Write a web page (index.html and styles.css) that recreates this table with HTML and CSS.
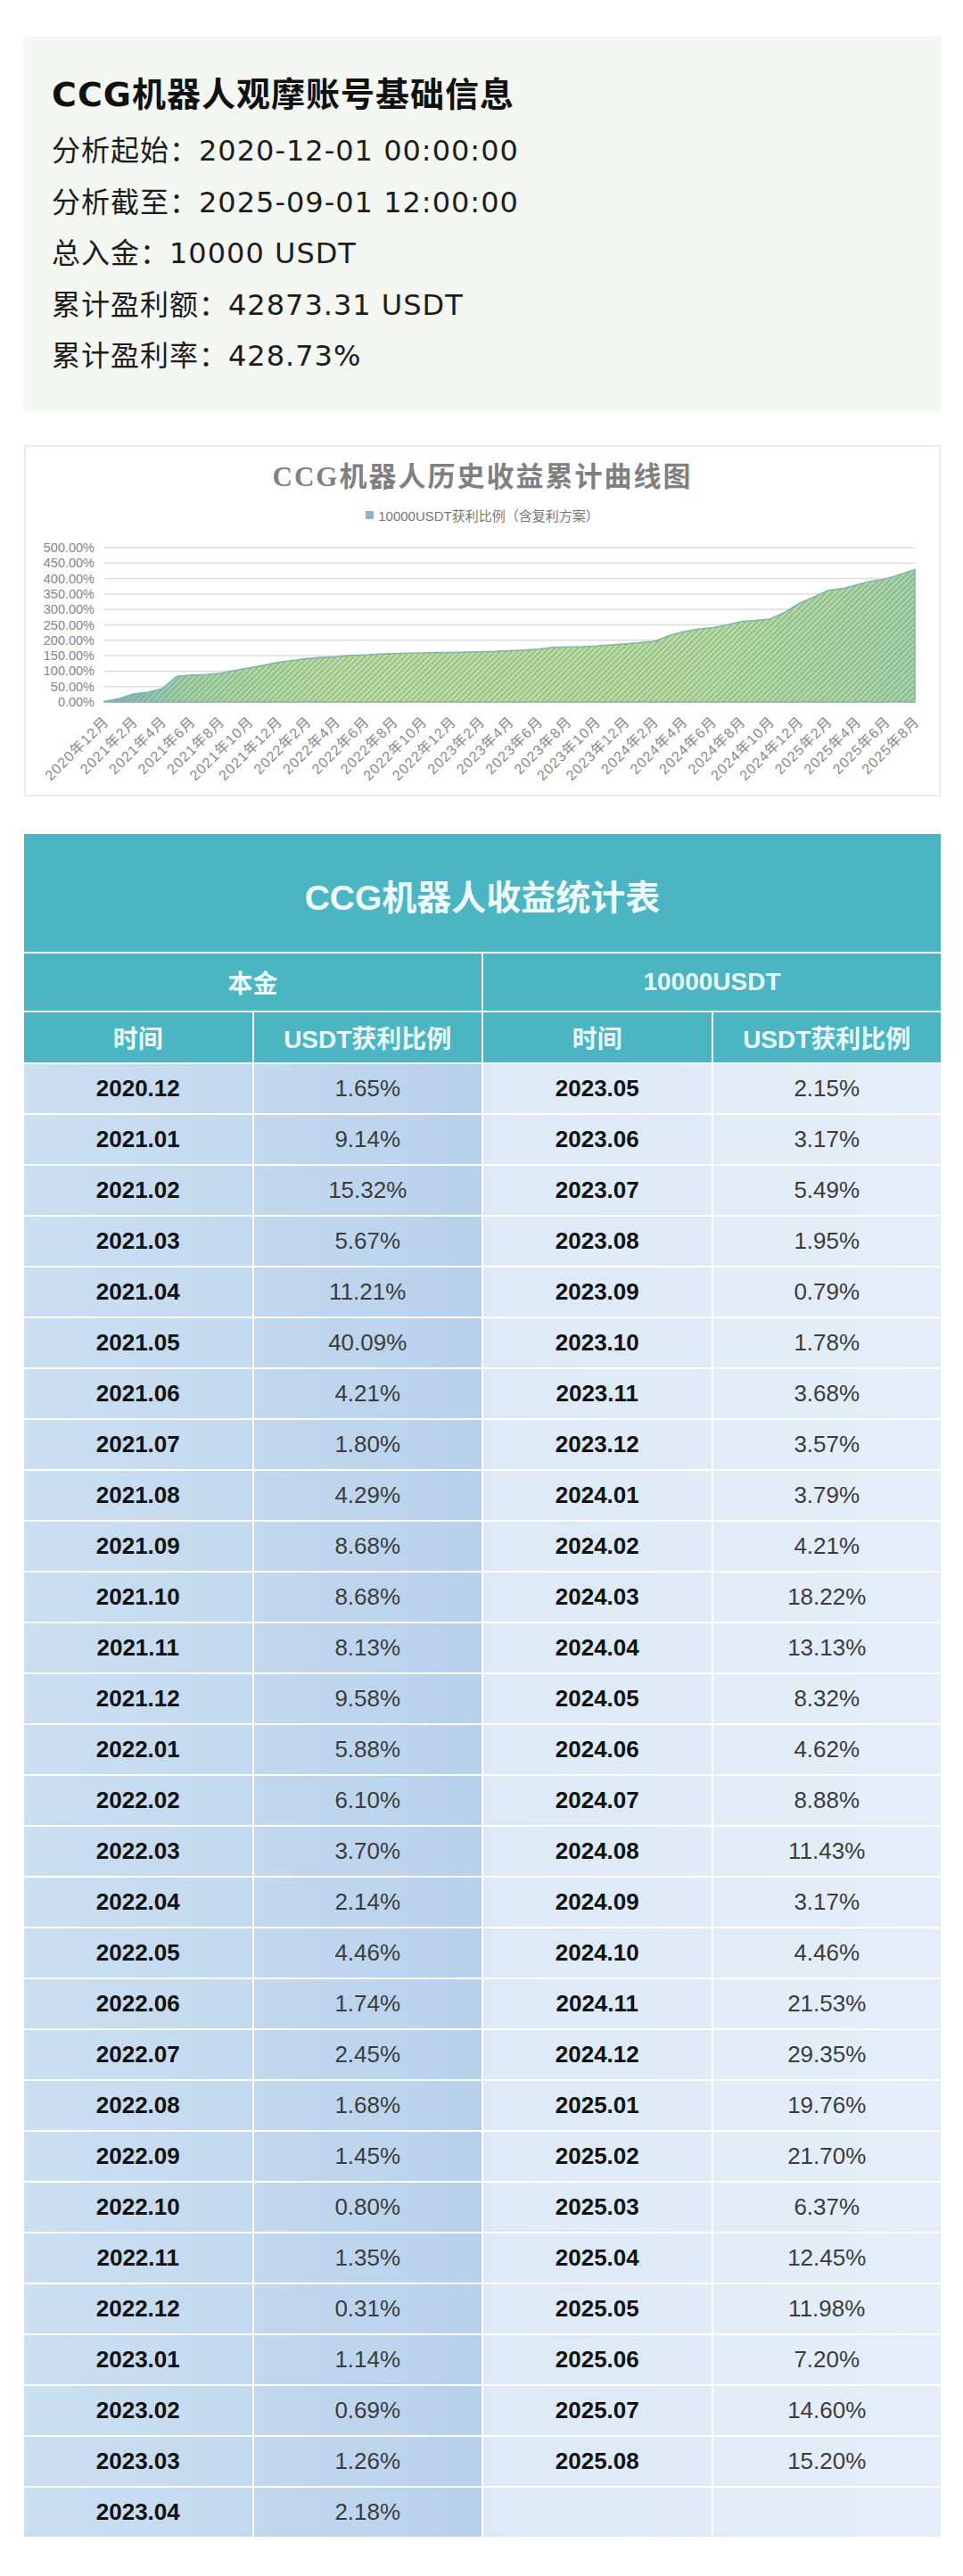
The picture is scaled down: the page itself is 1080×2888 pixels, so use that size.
FILE: index.html
```html
<!DOCTYPE html>
<html lang="zh-CN">
<head>
<meta charset="utf-8">
<title>CCG机器人观摩账号</title>
<link rel="stylesheet" href="styles.css">
</head>
<body>
<main class="page">
  <section class="info">
    <h1 class="info-title">CCG机器人观摩账号基础信息</h1>
    <p class="info-line">分析起始：2020-12-01 00:00:00</p>
    <p class="info-line">分析截至：2025-09-01 12:00:00</p>
    <p class="info-line">总入金：10000 USDT</p>
    <p class="info-line">累计盈利额：42873.31 USDT</p>
    <p class="info-line">累计盈利率：428.73%</p>
  </section>

  <section class="chart">
    <h2 class="chart-title">CCG机器人历史收益累计曲线图</h2>
    <div class="legend"><span class="legend-swatch"></span><span>10000USDT获利比例（含复利方案）</span></div>
    <svg class="plot" width="1024" height="303" viewBox="0 0 1024 303" xmlns="http://www.w3.org/2000/svg">
      <defs>
        <linearGradient id="areaFill" x1="0" y1="0" x2="1" y2="0">
          <stop offset="0" stop-color="#7db4c6"/>
          <stop offset="0.1" stop-color="#a6d3a2"/>
          <stop offset="0.3" stop-color="#bfe09a"/>
          <stop offset="0.75" stop-color="#b9dd9c"/>
          <stop offset="1" stop-color="#a9d4a4"/>
        </linearGradient>
        <pattern id="hatch" width="4.5" height="4.5" patternUnits="userSpaceOnUse" patternTransform="rotate(45)">
          <rect x="0" y="0" width="1.7" height="4.5" fill="#5f9187" fill-opacity="0.45"/>
        </pattern>
      </defs>
      <g transform="translate(-1 0)">
        <g class="grid-lines" stroke="#dcdcdc" stroke-width="1.5">
          <line x1="89" y1="26" x2="998" y2="26"/>
          <line x1="89" y1="43.3" x2="998" y2="43.3"/>
          <line x1="89" y1="60.6" x2="998" y2="60.6"/>
          <line x1="89" y1="77.9" x2="998" y2="77.9"/>
          <line x1="89" y1="95.2" x2="998" y2="95.2"/>
          <line x1="89" y1="112.5" x2="998" y2="112.5"/>
          <line x1="89" y1="129.8" x2="998" y2="129.8"/>
          <line x1="89" y1="147.1" x2="998" y2="147.1"/>
          <line x1="89" y1="164.4" x2="998" y2="164.4"/>
          <line x1="89" y1="181.7" x2="998" y2="181.7"/>
          <line x1="89" y1="199" x2="998" y2="199"/>
        </g>
        <g class="y-labels" text-anchor="end">
          <text x="78" y="31">500.00%</text>
          <text x="78" y="48.3">450.00%</text>
          <text x="78" y="65.6">400.00%</text>
          <text x="78" y="82.9">350.00%</text>
          <text x="78" y="100.2">300.00%</text>
          <text x="78" y="117.5">250.00%</text>
          <text x="78" y="134.8">200.00%</text>
          <text x="78" y="152.1">150.00%</text>
          <text x="78" y="169.4">100.00%</text>
          <text x="78" y="186.7">50.00%</text>
          <text x="78" y="204">0.00%</text>
        </g>
        <path d="M89,199 L89,198.4 L105.2,195.3 L121.5,190 L137.7,188 L153.9,184.1 L170.2,170.3 L186.4,168.8 L202.6,168.2 L218.9,166.7 L235.1,163.7 L251.3,160.7 L267.6,157.9 L283.8,154.6 L300,152.5 L316.3,150.4 L332.5,149.1 L348.7,148.4 L365,146.9 L381.2,146.3 L397.4,145.4 L413.6,144.8 L429.9,144.3 L446.1,144 L462.3,143.6 L478.6,143.5 L494.8,143.1 L511,142.8 L527.3,142.4 L543.5,141.6 L559.7,140.9 L576,139.8 L592.2,137.9 L608.4,137.2 L624.7,137 L640.9,136.3 L657.1,135.1 L673.4,133.8 L689.6,132.5 L705.8,131.1 L722.1,124.8 L738.3,120.2 L754.5,117.3 L770.8,115.7 L787,112.7 L803.2,108.7 L819.4,107.6 L835.7,106.1 L851.9,98.6 L868.1,88.5 L884.4,81.6 L900.6,74.1 L916.8,71.9 L933.1,67.6 L949.3,63.5 L965.5,61 L981.8,55.9 L998,50.7 L998,199 Z" fill="url(#areaFill)"/>
        <path d="M89,199 L89,198.4 L105.2,195.3 L121.5,190 L137.7,188 L153.9,184.1 L170.2,170.3 L186.4,168.8 L202.6,168.2 L218.9,166.7 L235.1,163.7 L251.3,160.7 L267.6,157.9 L283.8,154.6 L300,152.5 L316.3,150.4 L332.5,149.1 L348.7,148.4 L365,146.9 L381.2,146.3 L397.4,145.4 L413.6,144.8 L429.9,144.3 L446.1,144 L462.3,143.6 L478.6,143.5 L494.8,143.1 L511,142.8 L527.3,142.4 L543.5,141.6 L559.7,140.9 L576,139.8 L592.2,137.9 L608.4,137.2 L624.7,137 L640.9,136.3 L657.1,135.1 L673.4,133.8 L689.6,132.5 L705.8,131.1 L722.1,124.8 L738.3,120.2 L754.5,117.3 L770.8,115.7 L787,112.7 L803.2,108.7 L819.4,107.6 L835.7,106.1 L851.9,98.6 L868.1,88.5 L884.4,81.6 L900.6,74.1 L916.8,71.9 L933.1,67.6 L949.3,63.5 L965.5,61 L981.8,55.9 L998,50.7 L998,199 Z" fill="url(#hatch)" stroke="#86b3ab" stroke-width="1.6"/>
        <g class="x-labels" text-anchor="end">
          <text transform="translate(95 222) rotate(-45)">2020年12月</text>
          <text transform="translate(127.5 222) rotate(-45)">2021年2月</text>
          <text transform="translate(159.9 222) rotate(-45)">2021年4月</text>
          <text transform="translate(192.4 222) rotate(-45)">2021年6月</text>
          <text transform="translate(224.9 222) rotate(-45)">2021年8月</text>
          <text transform="translate(257.3 222) rotate(-45)">2021年10月</text>
          <text transform="translate(289.8 222) rotate(-45)">2021年12月</text>
          <text transform="translate(322.3 222) rotate(-45)">2022年2月</text>
          <text transform="translate(354.7 222) rotate(-45)">2022年4月</text>
          <text transform="translate(387.2 222) rotate(-45)">2022年6月</text>
          <text transform="translate(419.6 222) rotate(-45)">2022年8月</text>
          <text transform="translate(452.1 222) rotate(-45)">2022年10月</text>
          <text transform="translate(484.6 222) rotate(-45)">2022年12月</text>
          <text transform="translate(517 222) rotate(-45)">2023年2月</text>
          <text transform="translate(549.5 222) rotate(-45)">2023年4月</text>
          <text transform="translate(582 222) rotate(-45)">2023年6月</text>
          <text transform="translate(614.4 222) rotate(-45)">2023年8月</text>
          <text transform="translate(646.9 222) rotate(-45)">2023年10月</text>
          <text transform="translate(679.4 222) rotate(-45)">2023年12月</text>
          <text transform="translate(711.8 222) rotate(-45)">2024年2月</text>
          <text transform="translate(744.3 222) rotate(-45)">2024年4月</text>
          <text transform="translate(776.7 222) rotate(-45)">2024年6月</text>
          <text transform="translate(809.2 222) rotate(-45)">2024年8月</text>
          <text transform="translate(841.7 222) rotate(-45)">2024年10月</text>
          <text transform="translate(874.1 222) rotate(-45)">2024年12月</text>
          <text transform="translate(906.6 222) rotate(-45)">2025年2月</text>
          <text transform="translate(939.1 222) rotate(-45)">2025年4月</text>
          <text transform="translate(971.5 222) rotate(-45)">2025年6月</text>
          <text transform="translate(1004 222) rotate(-45)">2025年8月</text>
        </g>
      </g>
    </svg>
  </section>

  <section class="stats">
    <div class="stats-title">CCG机器人收益统计表</div>
    <div class="stats-grid">
      <div class="head head-top">本金</div>
      <div class="head head-top">10000USDT</div>
      <div class="head head-sub">时间</div>
      <div class="head head-sub">USDT获利比例</div>
      <div class="head head-sub">时间</div>
      <div class="head head-sub">USDT获利比例</div>

      <div class="cell date c1">2020.12</div><div class="cell pct c2">1.65%</div><div class="cell date c3">2023.05</div><div class="cell pct c4">2.15%</div>
      <div class="cell date c1">2021.01</div><div class="cell pct c2">9.14%</div><div class="cell date c3">2023.06</div><div class="cell pct c4">3.17%</div>
      <div class="cell date c1">2021.02</div><div class="cell pct c2">15.32%</div><div class="cell date c3">2023.07</div><div class="cell pct c4">5.49%</div>
      <div class="cell date c1">2021.03</div><div class="cell pct c2">5.67%</div><div class="cell date c3">2023.08</div><div class="cell pct c4">1.95%</div>
      <div class="cell date c1">2021.04</div><div class="cell pct c2">11.21%</div><div class="cell date c3">2023.09</div><div class="cell pct c4">0.79%</div>
      <div class="cell date c1">2021.05</div><div class="cell pct c2">40.09%</div><div class="cell date c3">2023.10</div><div class="cell pct c4">1.78%</div>
      <div class="cell date c1">2021.06</div><div class="cell pct c2">4.21%</div><div class="cell date c3">2023.11</div><div class="cell pct c4">3.68%</div>
      <div class="cell date c1">2021.07</div><div class="cell pct c2">1.80%</div><div class="cell date c3">2023.12</div><div class="cell pct c4">3.57%</div>
      <div class="cell date c1">2021.08</div><div class="cell pct c2">4.29%</div><div class="cell date c3">2024.01</div><div class="cell pct c4">3.79%</div>
      <div class="cell date c1">2021.09</div><div class="cell pct c2">8.68%</div><div class="cell date c3">2024.02</div><div class="cell pct c4">4.21%</div>
      <div class="cell date c1">2021.10</div><div class="cell pct c2">8.68%</div><div class="cell date c3">2024.03</div><div class="cell pct c4">18.22%</div>
      <div class="cell date c1">2021.11</div><div class="cell pct c2">8.13%</div><div class="cell date c3">2024.04</div><div class="cell pct c4">13.13%</div>
      <div class="cell date c1">2021.12</div><div class="cell pct c2">9.58%</div><div class="cell date c3">2024.05</div><div class="cell pct c4">8.32%</div>
      <div class="cell date c1">2022.01</div><div class="cell pct c2">5.88%</div><div class="cell date c3">2024.06</div><div class="cell pct c4">4.62%</div>
      <div class="cell date c1">2022.02</div><div class="cell pct c2">6.10%</div><div class="cell date c3">2024.07</div><div class="cell pct c4">8.88%</div>
      <div class="cell date c1">2022.03</div><div class="cell pct c2">3.70%</div><div class="cell date c3">2024.08</div><div class="cell pct c4">11.43%</div>
      <div class="cell date c1">2022.04</div><div class="cell pct c2">2.14%</div><div class="cell date c3">2024.09</div><div class="cell pct c4">3.17%</div>
      <div class="cell date c1">2022.05</div><div class="cell pct c2">4.46%</div><div class="cell date c3">2024.10</div><div class="cell pct c4">4.46%</div>
      <div class="cell date c1">2022.06</div><div class="cell pct c2">1.74%</div><div class="cell date c3">2024.11</div><div class="cell pct c4">21.53%</div>
      <div class="cell date c1">2022.07</div><div class="cell pct c2">2.45%</div><div class="cell date c3">2024.12</div><div class="cell pct c4">29.35%</div>
      <div class="cell date c1">2022.08</div><div class="cell pct c2">1.68%</div><div class="cell date c3">2025.01</div><div class="cell pct c4">19.76%</div>
      <div class="cell date c1">2022.09</div><div class="cell pct c2">1.45%</div><div class="cell date c3">2025.02</div><div class="cell pct c4">21.70%</div>
      <div class="cell date c1">2022.10</div><div class="cell pct c2">0.80%</div><div class="cell date c3">2025.03</div><div class="cell pct c4">6.37%</div>
      <div class="cell date c1">2022.11</div><div class="cell pct c2">1.35%</div><div class="cell date c3">2025.04</div><div class="cell pct c4">12.45%</div>
      <div class="cell date c1">2022.12</div><div class="cell pct c2">0.31%</div><div class="cell date c3">2025.05</div><div class="cell pct c4">11.98%</div>
      <div class="cell date c1">2023.01</div><div class="cell pct c2">1.14%</div><div class="cell date c3">2025.06</div><div class="cell pct c4">7.20%</div>
      <div class="cell date c1">2023.02</div><div class="cell pct c2">0.69%</div><div class="cell date c3">2025.07</div><div class="cell pct c4">14.60%</div>
      <div class="cell date c1">2023.03</div><div class="cell pct c2">1.26%</div><div class="cell date c3">2025.08</div><div class="cell pct c4">15.20%</div>
      <div class="cell date c1">2023.04</div><div class="cell pct c2">2.18%</div><div class="cell date c3"></div><div class="cell pct c4"></div>
    </div>
  </section>
</main>
</body>
</html>
```

FILE: styles.css
```css
* { box-sizing: border-box; }

html, body {
  margin: 0;
  padding: 0;
  background: #ffffff;
}

body {
  font-family: "DejaVu Sans", "Noto Sans CJK SC", sans-serif;
  color: #161616;
}

.page {
  width: 1080px;
  padding: 41px 25px 0 27px;
}

/* ---------- info box ---------- */
.info {
  background: #f4f6f1;
  padding: 40px 32px 32px 31px;
}

.info-title {
  margin: 0 0 10px 0;
  font-size: 38px;
  line-height: 50px;
  letter-spacing: 1px;
  font-weight: 700;
  color: #111111;
}

.info-line {
  margin: 0;
  font-size: 32px;
  line-height: 57.5px;
  letter-spacing: 1px;
  color: #1c1c1c;
}

/* ---------- chart ---------- */
.chart {
  margin-top: 38px;
  height: 394px;
  border: 2px solid #ebebeb;
  background: #ffffff;
}

.chart-title {
  margin: 0;
  padding-top: 12px;
  height: 56px;
  line-height: 44px;
  text-align: center;
  font-family: "Liberation Serif", "Noto Sans CJK SC", serif;
  font-size: 31px;
  font-weight: 700;
  letter-spacing: 2px;
  color: #808080;
}

.legend {
  margin-top: 11px;
  height: 20px;
  display: flex;
  justify-content: center;
  align-items: center;
  gap: 5px;
  font-family: "Liberation Sans", "Noto Sans CJK SC", sans-serif;
  font-size: 15px;
  color: #777777;
}

.legend-swatch {
  width: 9px;
  height: 9px;
  background: #8fb3c6;
}

.plot {
  display: block;
}

.y-labels text {
  font-family: "Liberation Sans", "Noto Sans CJK SC", sans-serif;
  font-size: 14.5px;
  fill: #858585;
}

.x-labels text {
  font-family: "Liberation Sans", "Noto Sans CJK SC", sans-serif;
  font-size: 16px;
  letter-spacing: 1px;
  fill: #8a8a8a;
}

/* ---------- stats table ---------- */
.stats {
  margin-top: 42px;
  font-family: "Liberation Sans", "Noto Sans CJK SC", sans-serif;
}

.stats-title {
  height: 132px;
  padding-top: 4px;
  display: flex;
  align-items: center;
  justify-content: center;
  background: #4bb5c3;
  color: #eefbfb;
  font-size: 39px;
  font-weight: 700;
}

.stats-grid {
  margin-top: 2px;
  display: grid;
  grid-template-columns: repeat(4, 1fr);
  gap: 2px;
  background: #ffffff;
}

.head {
  display: flex;
  align-items: center;
  justify-content: center;
  background: #4bb5c3;
  color: #e8fafa;
  font-size: 28px;
  font-weight: 700;
}

.head-top {
  grid-column: span 2;
  height: 64px;
}

.head-sub {
  height: 56px;
}

.cell {
  height: 55px;
  display: flex;
  align-items: center;
  justify-content: center;
  font-size: 26px;
}

.date {
  font-weight: 700;
  color: #121212;
}

.pct {
  color: #3c3c3c;
}

.c1 { background: linear-gradient(90deg, #cbdff2, #c3d9ef); }
.c2 { background: linear-gradient(90deg, #c1d8ee, #b8d1eb); }
.c3 { background: linear-gradient(90deg, #dde9f6, #e0ebf7); }
.c4 { background: linear-gradient(90deg, #e1ecf7, #e5eef8); }
```
